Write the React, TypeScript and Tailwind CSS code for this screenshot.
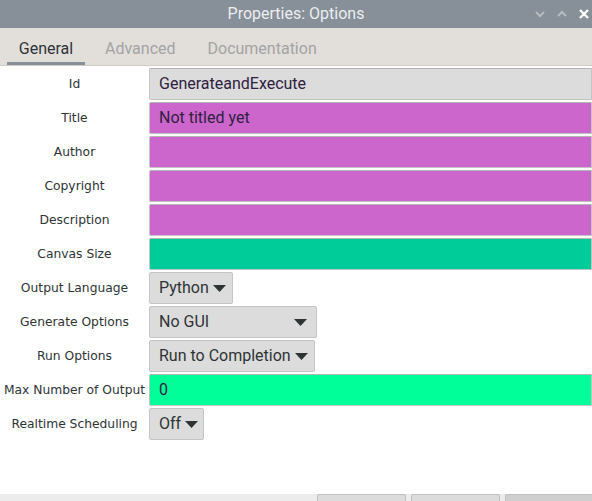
import { ReactNode } from "react";

type Row = {
  label: string;
  kind: "field" | "select";
  value?: string;
  bg?: string;
  width?: string;
  arrowGap?: string;
};

const rows: Row[] = [
  { label: "Id", kind: "field", value: "GenerateandExecute", bg: "bg-[#dcdcdc]" },
  { label: "Title", kind: "field", value: "Not titled yet", bg: "bg-[#cc66cc]" },
  { label: "Author", kind: "field", bg: "bg-[#cc66cc]" },
  { label: "Copyright", kind: "field", bg: "bg-[#cc66cc]" },
  { label: "Description", kind: "field", bg: "bg-[#cc66cc]" },
  { label: "Canvas Size", kind: "field", bg: "bg-[#00cc99]" },
  { label: "Output Language", kind: "select", value: "Python", width: "w-[84px]" },
  { label: "Generate Options", kind: "select", value: "No GUI", width: "w-[168px]", arrowGap: "justify-between" },
  { label: "Run Options", kind: "select", value: "Run to Completion", width: "w-[166px]" },
  { label: "Max Number of Output", kind: "field", value: "0", bg: "bg-[#00ff99]" },
  { label: "Realtime Scheduling", kind: "select", value: "Off", width: "w-[55px]" },
];

const tabs = [
  { name: "General", active: true, ml: "" },
  { name: "Advanced", active: false, ml: "ml-[20px]" },
  { name: "Documentation", active: false, ml: "ml-[32px]" },
];

function Arrow() {
  return (
    <svg width="13" height="7" viewBox="0 0 13 7" className="shrink-0">
      <path d="M0 0 L13 0 L6.5 7 Z" fill="#2e3436" />
    </svg>
  );
}

function Field({ row }: { row: Row }): ReactNode {
  if (row.kind === "select") {
    return (
      <div
        className={`${row.width} h-[32px] flex items-center gap-1 pl-[9px] pr-[9px] bg-[#dcdcdc] border border-[#c4c4c4] rounded-[2px] ${row.arrowGap ?? ""}`}
      >
        <span className="text-[16px] text-[#2e3436] whitespace-nowrap">{row.value}</span>
        <Arrow />
      </div>
    );
  }
  return (
    <div
      className={`w-[460px] h-[32px] flex items-center pl-[9px] ${row.bg} border border-[#c4c4c4] border-t-[#b4b4b4] rounded-l-[2px]`}
    >
      <span className="text-[16px] text-[#2e2140] whitespace-nowrap">{row.value}</span>
    </div>
  );
}

export default function App() {
  return (
    <div className="w-[592px] h-[501px] overflow-hidden flex flex-col bg-white font-['Roboto',sans-serif]">
      {/* title bar */}
      <div className="h-[28px] shrink-0 bg-[#878f98] relative flex items-center justify-center">
        <span className="text-[16px] text-[#eceef0]">Properties: Options</span>
        <div className="absolute right-[3px] top-0 h-full flex items-center gap-[12px]">
          <svg width="10" height="10" viewBox="0 0 10 10">
            <path d="M1 3 L5 7 L9 3" stroke="#b6bcc2" strokeWidth="2" fill="none" />
          </svg>
          <svg width="10" height="10" viewBox="0 0 10 10">
            <path d="M1 7 L5 3 L9 7" stroke="#b6bcc2" strokeWidth="2" fill="none" />
          </svg>
          <svg width="10" height="10" viewBox="0 0 10 10">
            <path d="M1 1 L9 9 M9 1 L1 9" stroke="#ffffff" strokeWidth="2.4" fill="none" />
          </svg>
        </div>
      </div>

      {/* tabs */}
      <div className="h-[38px] shrink-0 bg-[#e2dfdb] flex items-stretch pl-[7px] border-b border-[#cfcbc6]">
        {tabs.map((t) => (
          <div
            key={t.name}
            className={`${t.ml} ${t.active ? "w-[78px]" : ""} h-full flex flex-col items-center justify-between`}
          >
            <span className={`mt-[9px] text-[16px] ${t.active ? "text-[#2e3436]" : "text-[#a3a3a3]"}`}>{t.name}</span>
            <div className={`w-full h-[3px] ${t.active ? "bg-[#878f98]" : ""}`} />
          </div>
        ))}
      </div>

      {/* form */}
      <div className="flex flex-col gap-[2px] pt-[2px]">
        {rows.map((row) => (
          <div key={row.label} className="flex items-center h-[32px]">
            <div className="w-[149px] shrink-0 text-center text-[12.3px] text-[#2e3436] font-['DejaVu_Sans',sans-serif] whitespace-nowrap">
              {row.label}
            </div>
            <Field row={row} />
          </div>
        ))}
      </div>

      <div className="flex-1" />

      {/* footer buttons */}
      <div className="h-[7px] shrink-0 bg-[#ececec] flex justify-end gap-[5px]">
        <div className="w-[89px] bg-[#dcdcdc] border border-b-0 border-[#c0c0c0] rounded-t-[2px]" />
        <div className="w-[89px] bg-[#dcdcdc] border border-b-0 border-[#c0c0c0] rounded-t-[2px]" />
        <div className="w-[87px] bg-[#cfcfcf] border border-b-0 border-r-0 border-[#c0c0c0] rounded-tl-[2px]" />
      </div>
    </div>
  );
}
